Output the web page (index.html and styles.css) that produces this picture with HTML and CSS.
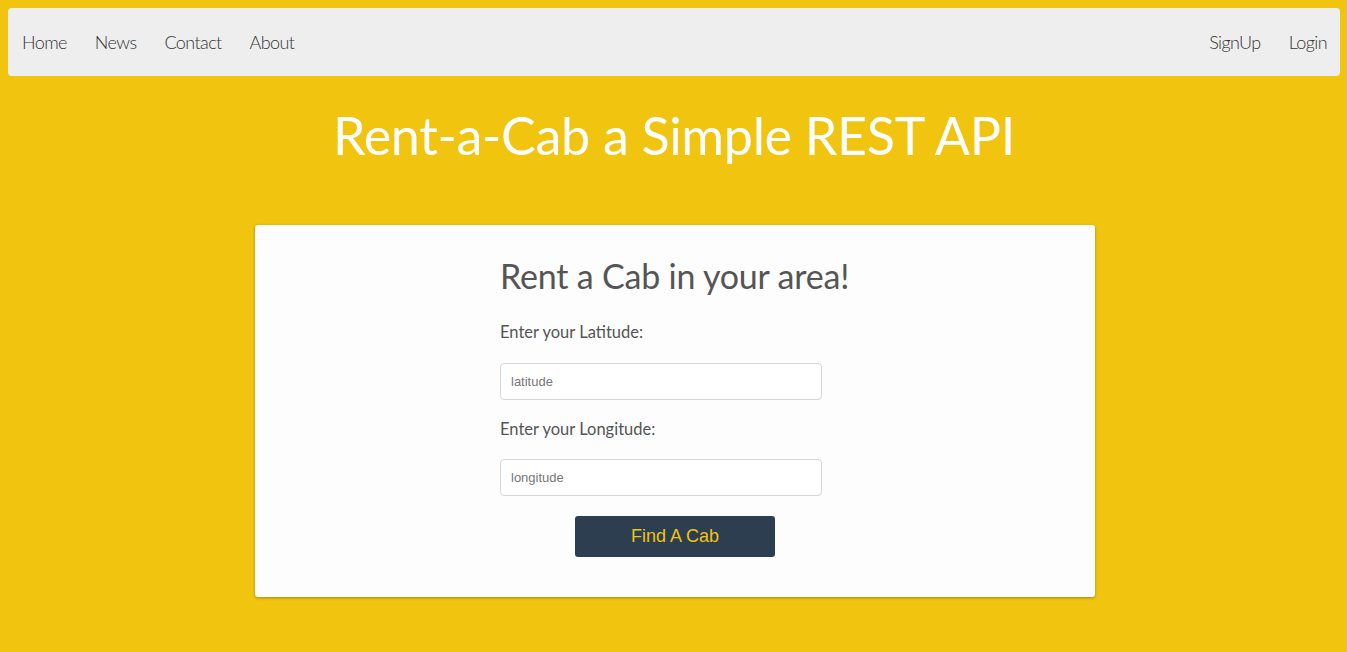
FILE: index.html
```html
<!DOCTYPE html>
<html>
<head>
<meta charset="utf-8">
<link rel="stylesheet" href="styles.css">
</head>
<body>
<nav class="navbar">
  <ul class="nav-left">
    <li><a href="#">Home</a></li>
    <li><a href="#">News</a></li>
    <li><a href="#">Contact</a></li>
    <li><a href="#">About</a></li>
  </ul>
  <ul class="nav-right">
    <li><a href="#">SignUp</a></li>
    <li><a href="#">Login</a></li>
  </ul>
</nav>
<h1 class="title">Rent-a-Cab a Simple REST API</h1>
<div class="content">
  <main class="card">
    <form class="form">
      <h2 class="form-title">Rent a Cab in your area!</h2>
      <label class="label" for="lat">Enter your Latitude:</label>
      <input class="input" id="lat" type="text" placeholder="latitude">
      <label class="label label-second" for="lng">Enter your Longitude:</label>
      <input class="input" id="lng" type="text" placeholder="longitude">
      <div class="actions"><button class="btn" type="button">Find A Cab</button></div>
    </form>
  </main>
</div>
</body>
</html>
```
FILE: styles.css
```css
* { box-sizing: border-box; }
html, body { margin: 0; }
body {
  background: #f1c40f;
  padding: 8px 7px 8px 8px;
  font-family: "Lato", "Liberation Sans", sans-serif;
  min-height: 652px;
}
.navbar {
  background: #eeeeee;
  border-radius: 4px;
  height: 68px;
  display: flex;
  justify-content: space-between;
  align-items: center;
  padding: 0 13px 0 14px;
}
.navbar ul {
  list-style: none;
  margin: 0;
  padding: 0;
  display: flex;
  gap: 28px;
}
.navbar a {
  font-family: "Lato", sans-serif;
  font-weight: 300;
  font-size: 18px;
  color: #333;
  text-decoration: none;
  letter-spacing: -0.6px;
}
.title {
  margin: 29px 0 0;
  text-align: center;
  color: #fff;
  font-family: "Lato", sans-serif;
  font-weight: 400;
  font-size: 52px;
  line-height: 60px;
  letter-spacing: -0.3px;
}
.content {
  padding-left: 2px;
}
.card {
  width: 840px;
  margin: 60px auto 0;
  background: #fdfdfd;
  border-radius: 3px;
  box-shadow: 0 1px 3px rgba(0,0,0,0.3);
  padding: 30px 0 40px;
  display: flex;
  justify-content: center;
}
.form {
  width: 350px;
  display: flex;
  flex-direction: column;
  align-items: flex-start;
}
.form-title {
  margin: 0 0 25px;
  font-weight: 400;
  font-size: 34px;
  line-height: 42px;
  color: #555;
  letter-spacing: -0.2px;
}
.label {
  font-size: 16.5px;
  color: #555;
  line-height: 20px;
  margin-bottom: 21px;
}
.label-second { margin-bottom: 20px; }
.input {
  width: 322px;
  height: 37px;
  border: 1px solid #d6d6d6;
  border-radius: 4px;
  padding: 0 10px;
  font-family: "Liberation Sans", Arial, sans-serif;
  font-size: 13px;
  color: #555;
  margin-bottom: 19px;
  background: #fff;
}
.input::placeholder { color: #777; }
.actions {
  width: 100%;
  display: flex;
  justify-content: center;
  margin-top: 1px;
}
.btn {
  width: 200px;
  height: 41px;
  background: #2c3e50;
  color: #f1c40f;
  border: none;
  border-radius: 3px;
  font-family: "Liberation Sans", Arial, sans-serif;
  font-size: 18px;
}
```
